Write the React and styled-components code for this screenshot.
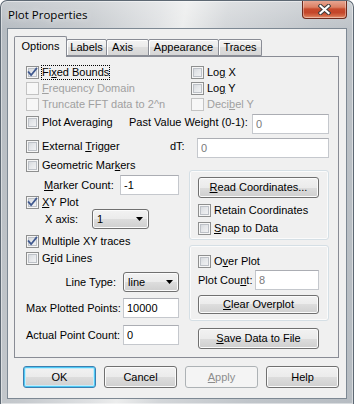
import React from 'react';
import styled, { createGlobalStyle } from 'styled-components';

const FONT = `"Liberation Sans", Arial, sans-serif`;
const PANEL_BG = '#f0f0f0';

const Global = createGlobalStyle`
  html, body { margin: 0; padding: 0; background: #ffffff; }
  body { width: 354px; height: 404px; overflow: hidden; }
  *, *::before, *::after { box-sizing: border-box; }
  u { text-decoration: underline; text-underline-offset: 1px; }
`;

const Window = styled.div`
  width: 354px;
  height: 404px;
  display: flex;
  flex-direction: column;
  border: 1px solid #5d6873;
  border-bottom: none;
  border-radius: 7px 7px 0 0;
  overflow: hidden;
  background:
    linear-gradient(180deg, rgba(255,255,255,0.25) 0px, rgba(255,255,255,0) 30px),
    linear-gradient(100deg, #b4bac0 0%, #c6cace 22%, #dfe1e3 38%, #eceded 44%, #d3d6d9 54%, #c0c5ca 75%, #b6bcc2 100%);
  box-shadow: inset 0 0 0 1px rgba(255,255,255,0.45);
  font-family: ${FONT};
  font-size: 11px;
  color: #000;
`;

const TitleBar = styled.div`
  height: 27px;
  flex-shrink: 0;
  display: flex;
  align-items: flex-start;
  padding: 0 6px 0 7px;
`;

const Title = styled.div`
  font-family: "Open Sans", "Noto Sans", sans-serif;
  font-size: 11.5px;
  line-height: 16px;
  margin-top: 6px;
  color: #000;
  text-shadow: 0 0 6px rgba(255,255,255,0.9);
`;

const CloseButton = styled.div`
  margin-left: auto;
  margin-top: -1px;
  width: 45px;
  height: 19px;
  border: 1px solid #6e2a1d;
  border-top: none;
  border-radius: 0 0 4px 4px;
  background: linear-gradient(180deg, #e9ab98 0%, #dc8064 40%, #c74a2c 50%, #c4462a 70%, #d46a48 88%, #e79a78 100%);
  box-shadow: inset 0 0 0 1px rgba(255,255,255,0.35);
  display: flex;
  align-items: center;
  justify-content: center;
`;

const Client = styled.div`
  margin: 0 6px;
  height: 371px;
  flex-shrink: 0;
  border: 1px solid #7d8893;
  background: #f0f0f0;
  padding: 7px 7px 0 6px;
  display: flex;
  flex-direction: column;
`;

const TabStrip = styled.div`
  height: 20px;
  display: flex;
  align-items: flex-end;
`;

const Tab = styled.div`
  position: relative;
  width: ${p => p.$w}px;
  height: ${p => (p.$active ? 21 : 17)}px;
  margin-left: ${p => (p.$first ? 0 : -1)}px;
  margin-bottom: ${p => (p.$active ? -1 : 0)}px;
  z-index: ${p => (p.$active ? 2 : 1)};
  border: 1px solid #898c95;
  border-bottom: ${p => (p.$active ? 'none' : '1px solid #898c95')};
  border-radius: 2px 2px 0 0;
  background: ${p => (p.$active
    ? PANEL_BG
    : 'linear-gradient(180deg, #f3f3f3 0%, #ebebeb 50%, #dedede 50%, #d6d6d6 100%)')};
  box-shadow: ${p => (p.$active ? 'none' : 'inset 1px 1px 0 #ffffff')};
  text-align: center;
  padding-top: ${p => (p.$active ? 3 : 1)}px;
  padding-right: ${p => p.$shift || 0}px;
  line-height: 13px;
  white-space: nowrap;
`;

const Panel = styled.div`
  height: 302px;
  border: 1px solid #898c95;
  background: ${PANEL_BG};
  padding: 9px 9px 0 11px;
  display: flex;
  flex-direction: column;
`;

const TopGrid = styled.div`
  display: grid;
  grid-template-columns: 165px 1fr;
  row-gap: 3px;
`;

const CheckRow = styled.div`
  display: flex;
  align-items: center;
  height: 13px;
  flex-shrink: 0;
  width: ${p => (p.$w ? `${p.$w}px` : 'auto')};
  margin-top: ${p => p.$mt || 0}px;
  color: ${p => (p.$disabled ? '#a0a0a0' : '#000')};
  white-space: nowrap;
`;

const Box = styled.span`
  width: 13px;
  height: 13px;
  flex-shrink: 0;
  border: 1px solid ${p => (p.$disabled ? '#c3c3c3' : '#8e8f8f')};
  background: ${p => (p.$disabled
    ? '#f7f7f7'
    : 'linear-gradient(135deg, #cdd1d6 0%, #e4e6e9 45%, #f7f7f8 100%)')};
  box-shadow: ${p => (p.$disabled
    ? 'none'
    : 'inset 0 0 0 1px #f6f6f6, inset 0 0 0 2px #bdc1c7')};
  display: flex;
  align-items: center;
  justify-content: center;
`;

const CheckLabel = styled.span`
  margin-left: ${p => (p.$focus ? 2 : 3)}px;
  line-height: 13px;
  padding: ${p => (p.$focus ? '1px 1px' : '0')};
  outline: ${p => (p.$focus ? '1px dotted #000' : 'none')};
  outline-offset: -1px;
`;

const Row = styled.div`
  display: flex;
  align-items: flex-start;
  height: 20px;
  flex-shrink: 0;
  margin-top: ${p => p.$mt || 0}px;
`;

const InlineLabel = styled.span`
  margin-top: 2px;
  line-height: 13px;
  white-space: nowrap;
`;

const FieldRow = styled.div`
  display: flex;
  align-items: center;
  height: 20px;
  flex-shrink: 0;
  margin-top: ${p => p.$mt || 0}px;
  padding-left: ${p => p.$pl || 0}px;
`;

const FieldLabel = styled.span`
  width: ${p => p.$w}px;
  flex-shrink: 0;
  text-align: ${p => (p.$right ? 'right' : 'left')};
  padding-right: ${p => (p.$right ? 7 : 0)}px;
  white-space: nowrap;
  line-height: 13px;
`;

const TextBox = styled.input`
  width: ${p => p.$w}px;
  height: 20px;
  flex-shrink: 0;
  margin: 0 0 0 ${p => (p.$auto ? 'auto' : '0')};
  padding: 0 0 0 3px;
  border: 1px solid #c5c8cd;
  border-top-color: #abadb3;
  border-radius: 0;
  background: #ffffff;
  font-family: ${FONT};
  font-size: 11px;
  color: ${p => (p.$dim ? '#7a7a7a' : '#000')};
  outline: none;
`;

const Combo = styled.div`
  width: ${p => p.$w}px;
  height: 20px;
  flex-shrink: 0;
  border: 1px solid #707070;
  border-radius: 3px;
  background: linear-gradient(180deg, #f2f2f2 0%, #ebebeb 50%, #dddddd 50%, #cfcfcf 100%);
  box-shadow: inset 0 0 0 1px #fbfbfb;
  display: flex;
  align-items: center;
  padding: 0 5px 0 4px;
  line-height: 13px;
`;

const ComboArrow = styled.svg`
  margin-left: auto;
  display: block;
`;

const Lower = styled.div`
  display: grid;
  grid-template-columns: 163px 140px;
`;

const Column = styled.div`
  display: flex;
  flex-direction: column;
`;

const GroupBox = styled.div`
  margin-top: ${p => p.$mt}px;
  height: ${p => p.$h}px;
  border: 1px solid #d5dfe5;
  border-radius: 3px;
  box-shadow: inset 0 0 0 1px #fbfbfb;
  padding: ${p => p.$pt}px 0 0 8px;
  display: flex;
  flex-direction: column;
`;

const Button = styled.button`
  width: ${p => p.$w}px;
  height: ${p => p.$h || 20}px;
  flex-shrink: 0;
  margin: ${p => p.$mt || 0}px 0 0 ${p => p.$ml || 0}px;
  padding: 0;
  border: 1px solid ${p => (p.$default ? '#3c7fb1' : p.disabled ? '#adb2b5' : '#707070')};
  border-radius: 3px;
  background: ${p => (p.disabled
    ? '#f4f4f4'
    : 'linear-gradient(180deg, #f2f2f2 0%, #ebebeb 50%, #dddddd 50%, #cfcfcf 100%)')};
  box-shadow: ${p => (p.$default
    ? 'inset 0 0 0 1px #4fc9f4, inset 0 0 0 2px #c4ecfb'
    : p.disabled ? 'none' : 'inset 0 0 0 1px #fbfbfb')};
  font-family: ${FONT};
  font-size: 11px;
  color: ${p => (p.disabled ? '#8d8d8d' : '#000')};
  line-height: 13px;
  cursor: default;
`;

const ButtonRow = styled.div`
  display: flex;
  gap: 8px;
  margin-top: 8px;
  padding-left: 9px;
`;

const CheckMark = () => (
  <svg width="11" height="11" viewBox="0 0 11 11">
    <path d="M1.6 5.2 L4.1 8.2 L9.4 1.6" fill="none" stroke="#40598f" strokeWidth="1.8" strokeLinecap="square" strokeLinejoin="miter" />
  </svg>
);

const Check = ({ label, checked, disabled, focus, w, mt }) => (
  <CheckRow $w={w} $mt={mt} $disabled={disabled}>
    <Box $disabled={disabled}>{checked && <CheckMark />}</Box>
    <CheckLabel $focus={focus}>{label}</CheckLabel>
  </CheckRow>
);

const Select = ({ value, w }) => (
  <Combo $w={w}>
    <span>{value}</span>
    <ComboArrow width="7" height="4" viewBox="0 0 7 4">
      <path d="M0 0 H7 L3.5 4 Z" fill="#000" />
    </ComboArrow>
  </Combo>
);

const CloseGlyph = () => (
  <svg width="13" height="11" viewBox="0 0 13 11">
    <path d="M2.5 2 L10.5 9 M10.5 2 L2.5 9" stroke="#3d3d3d" strokeWidth="4.2" strokeLinecap="square" />
    <path d="M2.5 2 L10.5 9 M10.5 2 L2.5 9" stroke="#ffffff" strokeWidth="2.2" strokeLinecap="square" />
  </svg>
);

const tabs = [
  { label: 'Options', w: 53, active: true },
  { label: 'Labels', w: 41 },
  { label: 'Axis', w: 43, shift: 10 },
  { label: 'Appearance', w: 71 },
  { label: 'Traces', w: 44 },
];

export default function App() {
  return (
    <>
      <Global />
      <Window>
        <TitleBar>
          <Title>Plot Properties</Title>
          <CloseButton><CloseGlyph /></CloseButton>
        </TitleBar>
        <Client>
          <TabStrip>
            {tabs.map((t, i) => (
              <Tab key={t.label} $w={t.w} $active={t.active} $first={i === 0} $shift={t.shift}>
                {t.label}
              </Tab>
            ))}
          </TabStrip>
          <Panel>
            <TopGrid>
              <Check checked focus label={<>Fi<u>x</u>ed Bounds</>} />
              <Check label={<>Lo<u>g</u> X</>} />
              <Check disabled label={<><u>F</u>requency Domain</>} />
              <Check label={<>Lo<u>g</u> Y</>} />
              <Check disabled label={<>Truncate FFT data to 2^n</>} />
              <Check disabled label={<>Deci<u>b</u>el Y</>} />
            </TopGrid>

            <Row $mt={3}>
              <Check w={103} mt={2} label="Plot Averaging" />
              <InlineLabel>Past Value Weight (0-1):</InlineLabel>
              <TextBox $w={77} $auto $dim readOnly value="0" />
            </Row>

            <Row $mt={4}>
              <Check w={144} mt={2} label={<>External <u>T</u>rigger</>} />
              <InlineLabel>dT:</InlineLabel>
              <TextBox $w={132} $auto $dim readOnly value="0" />
            </Row>

            <Lower>
              <Column>
                <Check mt={1} label={<>Geometric Mar<u>k</u>ers</>} />
                <FieldRow $mt={3} $pl={18}>
                  <FieldLabel $w={76}><u>M</u>arker Count:</FieldLabel>
                  <TextBox $w={59} readOnly value="-1" />
                </FieldRow>
                <Check checked mt={1} label={<><u>X</u>Y Plot</>} />
                <FieldRow $pl={19}>
                  <FieldLabel $w={47}>X axis:</FieldLabel>
                  <Select w={57} value="1" />
                </FieldRow>
                <Check checked mt={6} label="Multiple XY traces" />
                <Check mt={4} label={<>G<u>r</u>id Lines</>} />
                <FieldRow $mt={7}>
                  <FieldLabel $w={97} $right>Line Type:</FieldLabel>
                  <Select w={56} value="line" />
                </FieldRow>
                <FieldRow $mt={6}>
                  <FieldLabel $w={97}>Max Plotted Points:</FieldLabel>
                  <TextBox $w={56} readOnly value="10000" />
                </FieldRow>
                <FieldRow $mt={7}>
                  <FieldLabel $w={97}>Actual Point Count:</FieldLabel>
                  <TextBox $w={56} readOnly value="0" />
                </FieldRow>
              </Column>

              <Column>
                <GroupBox $mt={12} $h={70} $pt={6}>
                  <Button $w={121} $h={21}><u>R</u>ead Coordinates...</Button>
                  <Check mt={6} label="Retain Coordinates" />
                  <Check mt={5} label={<><u>S</u>nap to Data</>} />
                </GroupBox>
                <GroupBox $mt={5} $h={76} $pt={9}>
                  <Check label={<>O<u>v</u>er Plot</>} />
                  <FieldRow $mt={2}>
                    <FieldLabel $w={57}>Plot Cou<u>n</u>t:</FieldLabel>
                    <TextBox $w={64} $dim readOnly value="8" />
                  </FieldRow>
                  <Button $w={121} $h={19} $mt={5}><u>C</u>lear Overplot</Button>
                </GroupBox>
                <Button $w={121} $h={21} $mt={7} $ml={9}><u>S</u>ave Data to File</Button>
              </Column>
            </Lower>
          </Panel>
          <ButtonRow>
            <Button $w={73} $h={22} $default>OK</Button>
            <Button $w={73} $h={22}>Cancel</Button>
            <Button $w={73} $h={22} disabled><u>A</u>pply</Button>
            <Button $w={73} $h={22}>Help</Button>
          </ButtonRow>
        </Client>
      </Window>
    </>
  );
}
